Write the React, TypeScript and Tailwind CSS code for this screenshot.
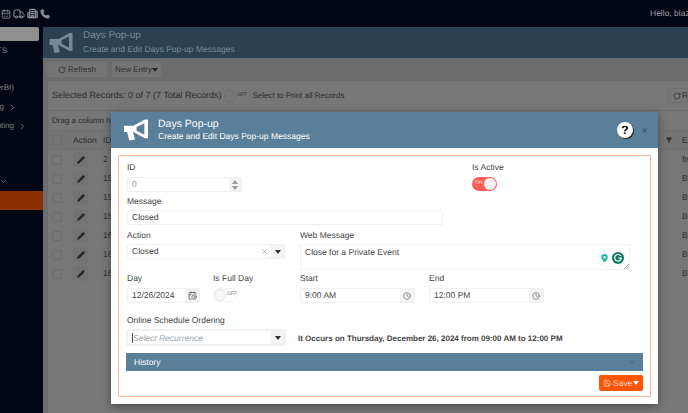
import { CalendarDays, Truck, Building2, Phone, RotateCw, Pencil, CalendarClock, Clock, Save, ChevronDown, ChevronRight, Filter, X } from 'lucide-react';

function Bullhorn({ className }: { className: string }) {
  return (
    <svg viewBox="0 0 24 22" className={className} fill="currentColor">
      <path
        fillRule="evenodd"
        d="M1 7 L10 7 L21 1 L24 1 L24 19 L21 19 L10 13 L9.5 13 L11.5 20 L6 21 L4 13 L1 13 Z M13 8.2 L20.5 4.5 L20.5 15.5 L13 11.8 Z"
      />
    </svg>
  );
}

function Caret({ className = 'border-t-[#333]' }: { className?: string }) {
  return <span className={`h-0 w-0 shrink-0 border-x-[3px] border-t-[4px] border-x-transparent ${className}`} />;
}

function Label({ children, h = 'h-[14px]' }: { children: string; h?: string }) {
  return <div className={`${h} text-[8.5px] leading-[10px] text-[#444]`}>{children}</div>;
}

function Field({ children, className = '' }: { children: React.ReactNode; className?: string }) {
  return (
    <div className={`flex h-[15px] items-center rounded-[2px] border border-[#f0f0f0] bg-white text-[8.5px] text-[#444] ${className}`}>
      {children}
    </div>
  );
}

function Addon({ children, className = 'w-[14px]' }: { children: React.ReactNode; className?: string }) {
  return <div className={`flex h-full shrink-0 items-center justify-center bg-[#f3f3f3] ${className}`}>{children}</div>;
}

function Toggle({ on }: { on?: boolean }) {
  if (on) {
    return (
      <div className="flex h-[14px] w-[25px] items-center justify-between rounded-full bg-[#ff5f57] pl-[3px] pr-[1px]">
        <span className="text-[5px] text-[#ffd9d5]">ON</span>
        <span className="h-[12px] w-[12px] rounded-full bg-[#f7f7f7]" />
      </div>
    );
  }
  return (
    <div className="flex h-[14px] w-[25px] items-center gap-[1px] rounded-full border border-[#f0f0f0] bg-white">
      <span className="h-[12px] w-[12px] rounded-full border border-[#e6e6e6] bg-[#f7f7f7]" />
      <span className="text-[5px] text-[#777]">OFF</span>
    </div>
  );
}

const rows = [
  { id: '2', right: 'fm' },
  { id: '15', right: 'Bl' },
  { id: '15', right: 'Bl' },
  { id: '15', right: 'Bl' },
  { id: '16', right: 'Bl' },
  { id: '16', right: 'Bl' },
  { id: '16', right: 'Bl' },
];

function Background() {
  return (
    <div className="flex h-[413px] w-[688px] flex-col overflow-hidden bg-[#010714]">
      <div className="flex h-[27px] shrink-0 items-center justify-between pl-[1px] text-[#8b8f96]">
        <div className="flex items-center gap-[2px]">
          <CalendarDays className="h-[10px] w-[10px]" />
          <Truck className="h-[12px] w-[12px]" />
          <Building2 className="h-[11px] w-[11px]" strokeWidth={3} />
          <Phone className="h-[10px] w-[10px]" fill="currentColor" />
        </div>
        <div className="w-[38px] overflow-hidden whitespace-nowrap text-[8.5px] text-[#9a9da3]">Hello, blazo</div>
      </div>
      <div className="flex min-h-0 flex-1">
        <div className="flex w-[43px] shrink-0 flex-col text-[8px] text-[#7f8388]">
          <div className="h-[14px] w-[39px] rounded-r-[2px] bg-[#8f8f8f]" />
          <div className="mt-[5px] flex h-[10px] w-[7px] items-center justify-end overflow-hidden whitespace-nowrap">REPORTS</div>
          <div className="mt-[27px] flex h-[10px] w-[14px] items-center justify-end overflow-hidden whitespace-nowrap">(PowerBI)</div>
          <div className="mt-[9px] flex h-[10px] items-center justify-end overflow-hidden whitespace-nowrap pr-[26px]">
            <span>Billing</span>
            <ChevronRight className="ml-[4px] h-[9px] w-[9px] shrink-0" />
          </div>
          <div className="mt-[9px] flex h-[10px] items-center justify-end overflow-hidden whitespace-nowrap pr-[16px]">
            <span>Accounting</span>
            <ChevronRight className="ml-[4px] h-[9px] w-[9px] shrink-0" />
          </div>
          <ChevronDown className="ml-[-1px] mt-[46px] h-[9px] w-[9px]" />
          <div className="mt-[5px] h-[19px] w-[43px] bg-[#8a3000]" />
        </div>
        <div className="flex min-w-0 flex-1 flex-col bg-[#6c6c6c]">
          <div className="flex h-[31px] shrink-0 items-center bg-[#2b4050] pl-[5px] text-[#788e9c]">
            <Bullhorn className="h-[22px] w-[25px] text-[#74899a]" />
            <div className="ml-[10px]">
              <div className="text-[10px] leading-[12px]">Days Pop-up</div>
              <div className="mt-[2px] text-[8.5px] leading-[11px]">Create and Edit Days Pop-up Messages</div>
            </div>
          </div>
          <div className="flex h-[23px] shrink-0 items-center gap-[5px] pl-[4px] text-[8px] text-[#2c2c2c]">
            <div className="flex h-[15px] w-[60px] items-center justify-center gap-[2px] bg-[#757575]">
              <RotateCw className="h-[8px] w-[8px]" />
              Refresh
            </div>
            <div className="flex h-[15px] w-[49px] items-center justify-between bg-[#757575] px-[3px]">
              New Entry
              <Caret className="border-t-[#222]" />
            </div>
          </div>
          <div className="ml-[5px] min-h-0 flex-1 bg-[#777777] text-[8.5px] text-[#2c2c2c]">
            <div className="flex h-[30px] items-center border-b border-[#6c6c6c] pl-[4px]">
              <span className="text-[9px]">Selected Records: 0 of 7 (7 Total Records)</span>
              <div className="ml-[3px] flex h-[13px] w-[24px] items-center gap-[1px] rounded-full bg-[#787878]">
                <span className="h-[12px] w-[12px] rounded-full border border-[#6e6e6e]" />
                <span className="text-[5px]">OFF</span>
              </div>
              <span className="ml-[4px] text-[8px]">Select to Print all Records</span>
              <div className="ml-auto flex h-[15px] w-[20px] items-center gap-[1px] overflow-hidden rounded-l-[2px] border border-[#6f6f6f] pl-[4px]">
                <RotateCw className="h-[8px] w-[8px] shrink-0" />
                <span>Refresh</span>
              </div>
            </div>
            <div className="flex h-[19px] items-center pl-[4px] text-[8px]">Drag a column header here</div>
            <div className="flex h-[20px] items-center border-y border-[#707070] bg-[#747474] pl-[4px]">
              <span className="h-[10px] w-[10px] rounded-[2px] border border-[#6c6c6c]" />
              <span className="ml-[11px] w-[30px]">Action</span>
              <span>ID</span>
              <Filter className="ml-auto h-[6px] w-[6px]" fill="currentColor" />
              <span className="ml-[10px] w-[6px] overflow-hidden">Ea</span>
            </div>
            {rows.map((row, i) => (
              <div key={i} className="flex h-[19px] items-center pl-[4px]">
                <span className="h-[10px] w-[10px] rounded-[2px] border border-[#6c6c6c]" />
                <span className="ml-[11px] flex h-[15px] w-[15px] items-center justify-center rounded-[2px] bg-[#737373]">
                  <Pencil className="h-[8px] w-[8px] text-[#222]" fill="currentColor" />
                </span>
                <span className="ml-[15px]">{row.id}</span>
                <span className="ml-auto w-[6px] overflow-hidden">{row.right}</span>
              </div>
            ))}
          </div>
        </div>
      </div>
    </div>
  );
}

function Modal() {
  return (
    <div className="absolute left-[111px] top-[112px] h-[292px] w-[547px] bg-white shadow-[0_2px_8px_rgba(0,0,0,0.4)]">
      <div className="flex h-[36px] items-center bg-[#5a7f9b] pl-[12px] pr-[10px] text-white">
        <Bullhorn className="h-[26px] w-[25px]" />
        <div className="ml-[10px]">
          <div className="text-[10.5px] leading-[12px]">Days Pop-up</div>
          <div className="mt-[1px] text-[8.5px] leading-[11px]">Create and Edit Days Pop-up Messages</div>
        </div>
        <div className="ml-auto flex h-[16px] w-[16px] items-center justify-center rounded-full bg-white text-[12px] font-bold text-black shadow-[1px_1px_0_#222]">
          ?
        </div>
        <X className="ml-[8px] h-[7px] w-[7px] text-[#3d4a55]" strokeWidth={3.5} />
      </div>
      <div className="mx-[7px] mt-[7px] h-[242px] border border-[#ffb89c] pl-[8px] pr-[7px] pt-[6px]">
        <div className="flex">
          <div className="w-[345px]">
            <Label h="h-[15px]">ID</Label>
            <Field className="w-[115px] pl-[4px] text-[#999]">
              <span className="flex-1">0</span>
              <Addon className="w-[12px] flex-col gap-[2px]">
                <Caret className="rotate-180 border-t-[#999]" />
                <Caret className="border-t-[#999]" />
              </Addon>
            </Field>
          </div>
          <div>
            <Label h="h-[15px]">Is Active</Label>
            <Toggle on />
          </div>
        </div>
        <div className="mt-[4px]">
          <Label>Message</Label>
          <Field className="w-[316px] pl-[4px]">Closed</Field>
        </div>
        <div className="mt-[5px] flex">
          <div className="w-[173px]">
            <Label>Action</Label>
            <Field className="w-[158px] pl-[4px]">
              <span className="flex-1">Closed</span>
              <X className="mr-[3px] h-[7px] w-[7px] text-[#777]" />
              <Addon className="w-[13px]"><Caret /></Addon>
            </Field>
          </div>
          <div>
            <Label>Web Message</Label>
            <div className="relative h-[26px] w-[330px] rounded-[2px] border border-[#f0f0f0] pl-[4px] pt-[2px] text-[8.5px] leading-[11px] text-[#444]">
              Close for a Private Event
              <div className="absolute right-[4px] top-[5px] flex h-[16px] w-[27px] items-center justify-between rounded-full bg-white pl-[3px] pr-[1px] shadow-[0_0_1px_#bbb]">
                <svg viewBox="0 0 8 11" className="h-[9px] w-[7px]">
                  <path fill="#1fb8a0" fillRule="evenodd" d="M4 0 A4 4 0 0 1 8 4 C8 6.5 5.5 8 5.5 9.5 L2.5 9.5 C2.5 8 0 6.5 0 4 A4 4 0 0 1 4 0 Z M4 2.5 A1.5 1.5 0 1 0 4 5.5 A1.5 1.5 0 1 0 4 2.5 Z" />
                </svg>
                <svg viewBox="0 0 12 12" className="h-[12px] w-[12px]">
                  <circle cx="6" cy="6" r="6" fill="#0f7a60" />
                  <path fill="none" stroke="#fff" strokeWidth="1.2" d="M8.8 4 A3.3 3.3 0 1 0 9.3 6.2 L6.5 6.2" />
                </svg>
              </div>
              <svg viewBox="0 0 6 6" className="absolute bottom-0 right-0 h-[5px] w-[5px]">
                <path stroke="#777" strokeWidth="0.8" d="M0 6 L6 0 M3 6 L6 3" />
              </svg>
            </div>
          </div>
        </div>
        <div className="mt-[3px] flex">
          <div className="w-[86px]">
            <Label h="h-[15px]">Day</Label>
            <Field className="w-[73px] pl-[4px]">
              <span className="flex-1">12/26/2024</span>
              <Addon><CalendarClock className="h-[9px] w-[9px] text-[#555]" /></Addon>
            </Field>
          </div>
          <div className="w-[87px]">
            <Label h="h-[15px]">Is Full Day</Label>
            <Toggle />
          </div>
          <div className="w-[129px]">
            <Label h="h-[15px]">Start</Label>
            <Field className="w-[115px] pl-[4px]">
              <span className="flex-1">9:00 AM</span>
              <Addon><Clock className="h-[8px] w-[8px] text-[#666]" /></Addon>
            </Field>
          </div>
          <div className="w-[115px]">
            <Label h="h-[15px]">End</Label>
            <Field className="w-[115px] pl-[4px]">
              <span className="flex-1">12:00 PM</span>
              <Addon><Clock className="h-[8px] w-[8px] text-[#666]" /></Addon>
            </Field>
          </div>
        </div>
        <div className="mt-[12px] flex">
          <div className="w-[171px]">
            <Label h="h-[15px]">Online Schedule Ordering</Label>
            <Field className="w-[158px] border-[#dddddd] pl-[4px] shadow-[0_0_2px_#ccc]">
              <span className="flex-1 border-l border-[#555] italic leading-[10px] text-[#9aa5ad]">Select Recurrence</span>
              <Addon className="w-[13px]"><Caret /></Addon>
            </Field>
          </div>
          <div className="flex items-end pb-[1px] text-[8px] font-bold leading-[11px] text-[#444]">
            It Occurs on Thursday, December 26, 2024 from 09:00 AM to 12:00 PM
          </div>
        </div>
        <div className="-ml-px mt-[8px] flex h-[18px] w-[517px] items-center justify-between bg-[#5a7f9b] pl-[8px] pr-[7px] text-[8.5px] text-white">
          History
          <ChevronDown className="h-[8px] w-[8px] text-[#3d4a55]" />
        </div>
        <div className="mt-[4px] flex w-[516px] justify-end">
          <div className="flex h-[16px] w-[44px] items-center rounded-[2px] bg-[#ff5500] pl-[4px] text-[8.5px] text-[#ffd7c2]">
            <Save className="h-[8px] w-[8px]" />
            <span className="ml-[2px] flex-1">Save</span>
            <Caret className="mr-[4px] border-t-white" />
          </div>
        </div>
      </div>
    </div>
  );
}

export default function App() {
  return (
    <div className="relative h-[413px] w-[688px] overflow-hidden font-['Liberation_Sans',Arial,sans-serif] [text-rendering:geometricPrecision]">
      <Background />
      <Modal />
    </div>
  );
}
